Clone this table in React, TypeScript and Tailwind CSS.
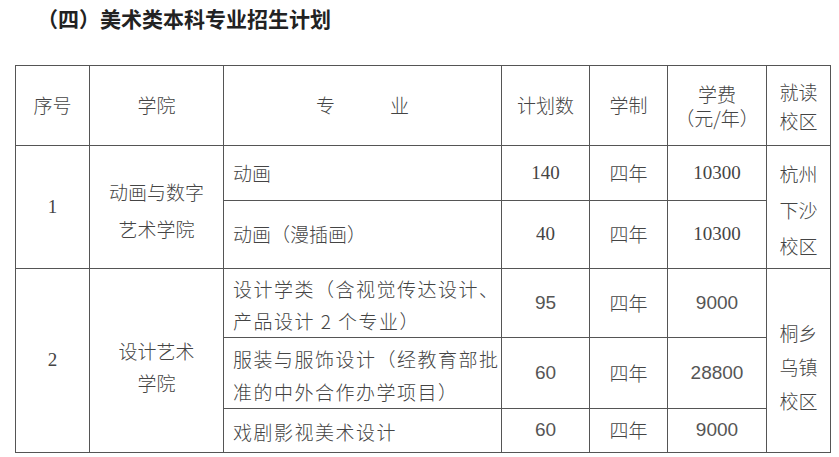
import React from 'react';

const cell = 'border border-[#555] p-0 text-center align-middle';
const serifNum = "font-['Liberation_Serif',serif]";
const sansNum = "font-['Liberation_Sans',sans-serif] text-[#555]";

const App = () => {
  return (
    <div className="w-[839px] h-[457px] bg-white text-[#444] font-['Noto_Sans_CJK_SC',sans-serif] overflow-hidden">
      <h1 className="pl-[37px] pt-[4px] h-[65px] text-[21px] font-bold text-[#222] leading-[28px]">
        （四）美术类本科专业招生计划
      </h1>
      <table className="ml-[15px] w-[815px] table-fixed border-collapse text-[19px] font-light">
        <colgroup>
          <col className="w-[74px]" />
          <col className="w-[134px]" />
          <col className="w-[278px]" />
          <col className="w-[88px]" />
          <col className="w-[78px]" />
          <col className="w-[99px]" />
          <col className="w-[64px]" />
        </colgroup>
        <tbody>
          <tr className="h-[80px]">
            <td className={cell}>序号</td>
            <td className={cell}>学院</td>
            <td className={cell}>
              <span className="inline-flex gap-[55px]">
                <span>专</span>
                <span>业</span>
              </span>
            </td>
            <td className={cell}>计划数</td>
            <td className={cell}>学制</td>
            <td className={`${cell} leading-[24px]`}>
              学费
              <br />
              （元/年）
            </td>
            <td className={`${cell} leading-[29px]`}>
              就读
              <br />
              校区
            </td>
          </tr>

          <tr className="h-[55px]">
            <td rowSpan={2} className={`${cell} ${serifNum}`}>1</td>
            <td rowSpan={2} className={`${cell} leading-[37px] pt-[6px]`}>
              动画与数字
              <br />
              艺术学院
            </td>
            <td className={`${cell} text-left pl-[9px]`}>动画</td>
            <td className={`${cell} ${serifNum}`}>140</td>
            <td className={cell}>四年</td>
            <td className={`${cell} ${serifNum}`}>10300</td>
            <td rowSpan={2} className={`${cell} leading-[36px] pt-[6px]`}>
              杭州
              <br />
              下沙
              <br />
              校区
            </td>
          </tr>
          <tr className="h-[68px]">
            <td className={`${cell} text-left pl-[9px]`}>动画（漫插画）</td>
            <td className={`${cell} ${serifNum}`}>40</td>
            <td className={cell}>四年</td>
            <td className={`${cell} ${serifNum}`}>10300</td>
          </tr>

          <tr className="h-[69px]">
            <td rowSpan={3} className={`${cell} ${serifNum}`}>2</td>
            <td rowSpan={3} className={`${cell} leading-[32px] pt-[12px]`}>
              设计艺术
              <br />
              学院
            </td>
            <td className={`${cell} text-left pl-[9px] tracking-[1.5px] leading-[32px] pt-[4px]`}>
              设计学类（含视觉传达设计、
              <br />
              产品设计 2 个专业）
            </td>
            <td className={`${cell} ${sansNum}`}>95</td>
            <td className={cell}>四年</td>
            <td className={`${cell} ${sansNum}`}>9000</td>
            <td rowSpan={3} className={`${cell} leading-[34px] pt-[12px]`}>
              桐乡
              <br />
              乌镇
              <br />
              校区
            </td>
          </tr>
          <tr className="h-[71px]">
            <td className={`${cell} text-left pl-[9px] tracking-[1.5px] leading-[33px] pt-[4px]`}>
              服装与服饰设计（经教育部批
              <br />
              准的中外合作办学项目）
            </td>
            <td className={`${cell} ${sansNum}`}>60</td>
            <td className={cell}>四年</td>
            <td className={`${cell} ${sansNum}`}>28800</td>
          </tr>
          <tr className="h-[44px]">
            <td className={`${cell} text-left pl-[9px] tracking-[1.5px] pt-[4px]`}>戏剧影视美术设计</td>
            <td className={`${cell} ${sansNum}`}>60</td>
            <td className={cell}>四年</td>
            <td className={`${cell} ${sansNum}`}>9000</td>
          </tr>
        </tbody>
      </table>
    </div>
  );
};

export default App;
